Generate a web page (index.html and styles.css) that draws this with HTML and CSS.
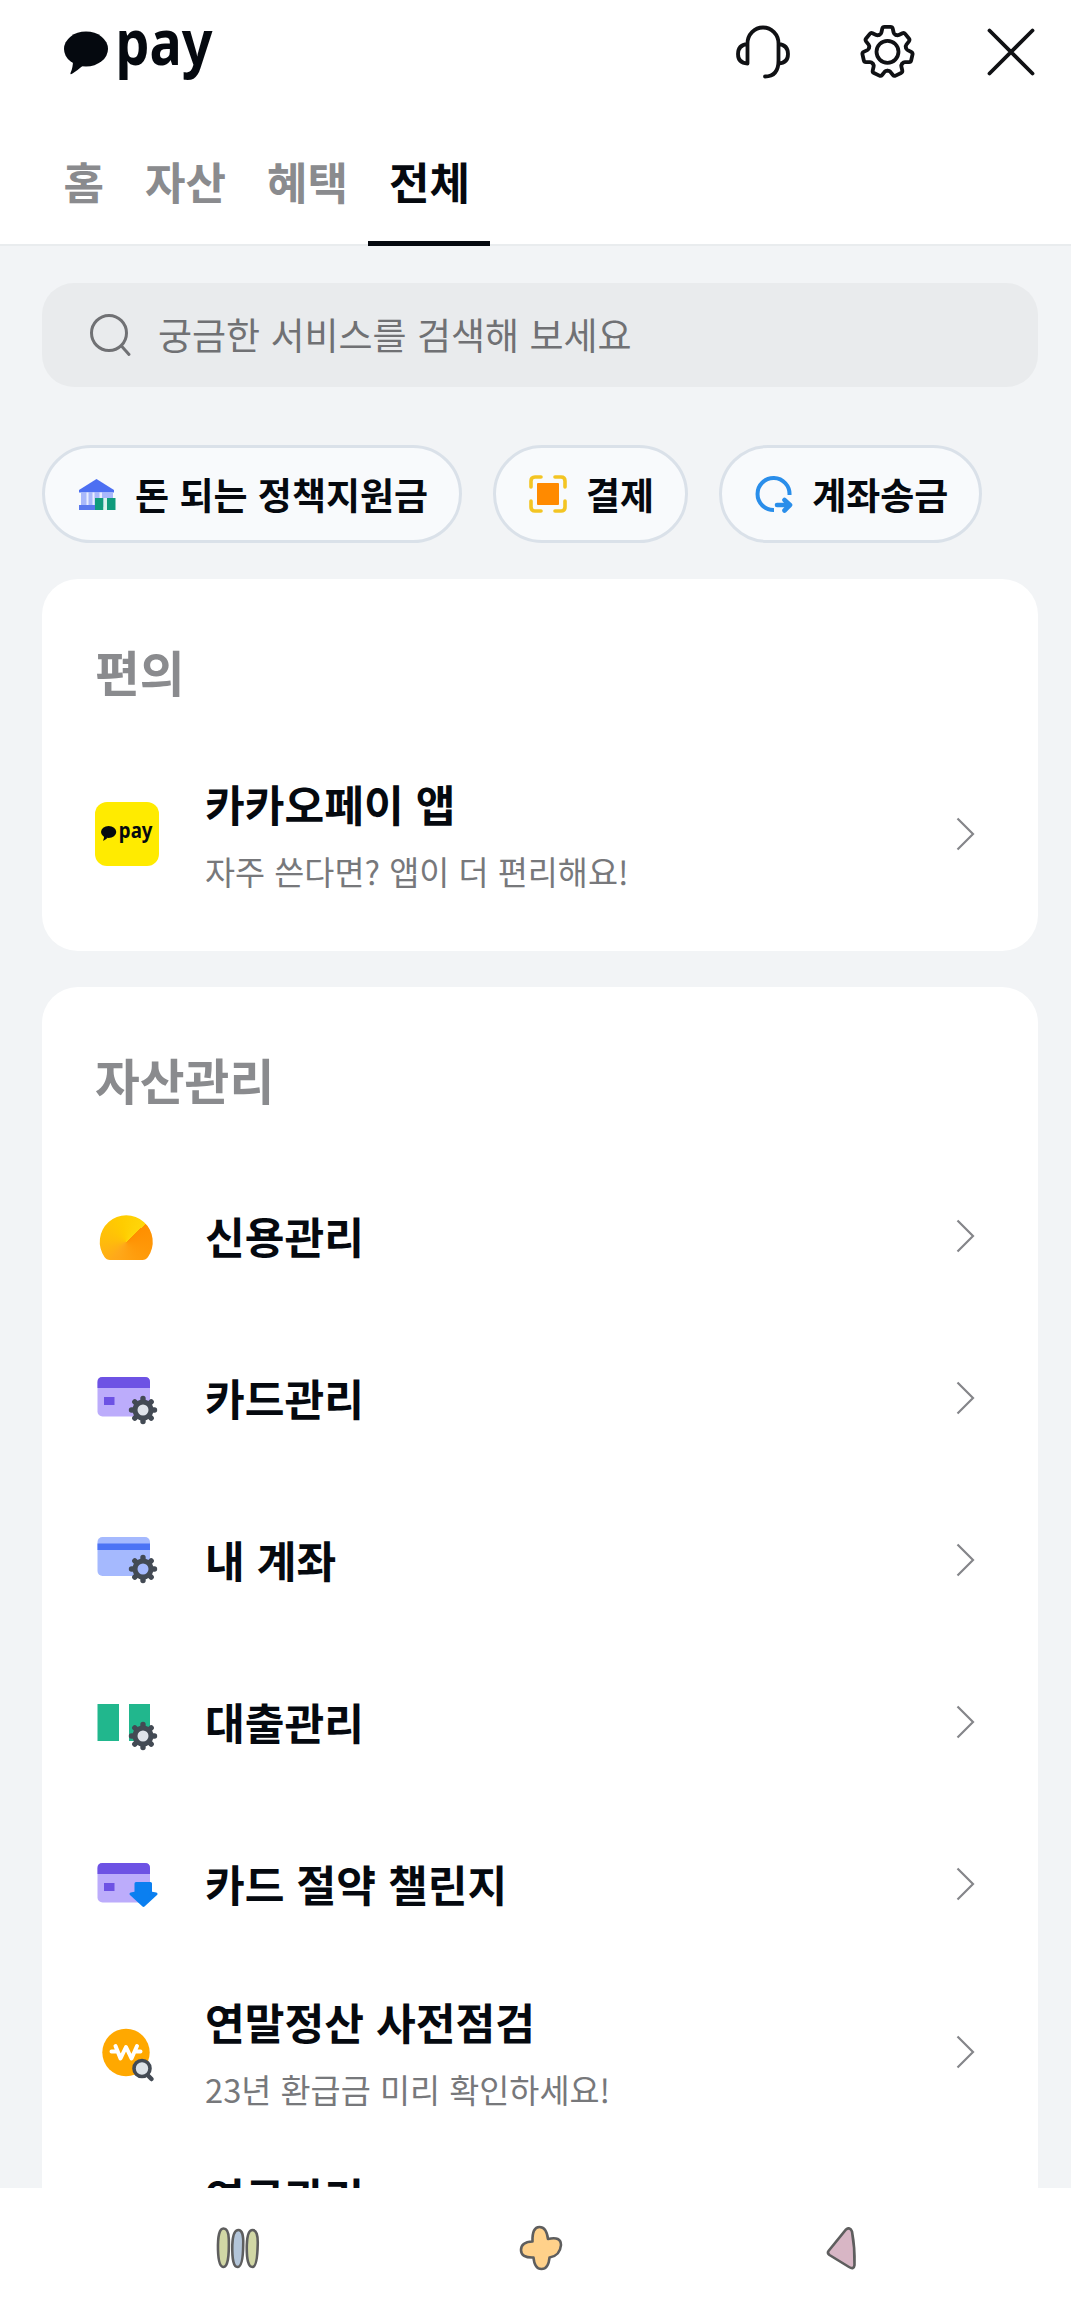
FILE: index.html
```html
<!DOCTYPE html>
<html lang="ko">
<head>
<meta charset="utf-8">
<title>pay</title>
<link rel="stylesheet" href="styles.css">
</head>
<body>
<svg class="defs" width="0" height="0" aria-hidden="true">
  <symbol id="logo" viewBox="0 0 150 50">
    <ellipse cx="22" cy="20" rx="22" ry="17.5"/>
    <path d="M9 31 Q9 39 6.500 44 Q6 46.200 8.500 44.500 Q14 41 19 36.500Z"/>
    <text class="logo-text" x="51.500" y="36" textLength="97" lengthAdjust="spacingAndGlyphs">pay</text>
  </symbol>
  <symbol id="cog" viewBox="-15 -15 30 30">
    <path d="M0-11.500V11.500M-11.500 0H11.500M-8.200-8.200L8.200 8.200M-8.200 8.200L8.200-8.200" stroke="#434a54" stroke-width="5.400" stroke-linecap="round"/>
    <circle r="8" fill="none" stroke="#434a54" stroke-width="5"/>
    <circle class="cog-hole" r="5.500"/>
  </symbol>
  <symbol id="chevron" viewBox="0 0 20 34">
    <path d="M1.500 1.500L17 17L1.500 32.500" fill="none" stroke="#85868a" stroke-width="2.200"/>
  </symbol>
</svg>

<header class="header">
  <div class="topbar">
    <svg class="logo" role="img" aria-label="pay"><use href="#logo"/></svg>
    <div class="actions">
      <svg class="action" viewBox="-28 -28 56 56" fill="none">
        <path d="M-15.500 11.500V-8.500A15.500 16 0 0 1 15.500-8.500V8.500Q15.500 24.500 2 24.500M-15.500-8Q-25-7-25 2Q-25 11-15.500 11.500M15.500-8Q25-7 25 2Q25 11 15.500 11.500" stroke-linecap="round"/>
      </svg>
      <svg class="action" viewBox="-28 -28 56 56" fill="none">
        <g transform="translate(.5 -.2)">
          <path id="tooth" d="M-8-17.100Q-6.500-17.800-6.100-19.300L-5.200-23.300Q-4.800-25-3-25H3Q4.800-25 5.200-23.300L6.100-19.300Q6.500-17.800 8-17.100" stroke-linecap="round"/>
          <use href="#tooth" transform="rotate(51.430)"/>
          <use href="#tooth" transform="rotate(102.860)"/>
          <use href="#tooth" transform="rotate(154.290)"/>
          <use href="#tooth" transform="rotate(205.710)"/>
          <use href="#tooth" transform="rotate(257.140)"/>
          <use href="#tooth" transform="rotate(308.570)"/>
          <circle r="11"/>
        </g>
      </svg>
      <svg class="action" viewBox="-28 -28 56 56" fill="none">
        <path d="M-21.500-21.500L21.500 21.500M21.500-21.500L-21.500 21.500" stroke-linecap="round"/>
      </svg>
    </div>
  </div>
  <nav class="tabs">
    <a class="tab">홈</a>
    <a class="tab">자산</a>
    <a class="tab">혜택</a>
    <a class="tab tab-active">전체</a>
  </nav>
</header>

<main class="content">
  <div class="search">
    <svg class="search-icon" viewBox="0 0 44 44" fill="none" stroke="#707174" stroke-width="3" stroke-linecap="round"><circle cx="20" cy="20" r="17.500"/><path d="M32.500 33L40 41.500"/></svg>
    <span class="search-text">궁금한 서비스를 검색해 보세요</span>
  </div>

  <div class="chips">
    <div class="chip">
      <svg class="chip-icon" viewBox="0 0 38 38">
        <path d="M1 15L18.500 4L36 15V17.500H1Z" fill="#4d6ff2"/>
        <path d="M3 17.500H35V32H3Z" fill="#a9b8fb"/>
        <path d="M8.500 17.500H10.500V32H8.500ZM14.500 17.500H16.500V32H14.500ZM21.500 17.500H24V24H21.500Z" fill="#e9edff"/>
        <path d="M1 30H18V35H1Z" fill="#5a78ee"/>
        <path d="M17 23H25.500V35H17ZM29 23H37.500V35H29Z" fill="#109b7c"/>
        <path d="M25.500 23H29V35H25.500Z" fill="#d9f3ec"/>
      </svg>
      <span>돈 되는 정책지원금</span>
    </div>
    <div class="chip">
      <svg class="chip-icon" viewBox="0 0 38 38">
        <path d="M2 12V6Q2 2 6 2H12M26 2H32Q36 2 36 6V12M36 26V32Q36 36 32 36H26M12 36H6Q2 36 2 32V26" fill="none" stroke="#f3c523" stroke-width="3.600" stroke-linecap="round"/>
        <rect x="8" y="8" width="22" height="22" rx="1" fill="#ff8a00"/>
      </svg>
      <span>결제</span>
    </div>
    <div class="chip">
      <svg class="chip-icon" viewBox="0 0 38 38" fill="none" stroke="#2a8eea" stroke-width="4">
        <path d="M34.500 20A16 16 0 1 0 19 35"/>
        <path d="M22 30H34M29.500 25L35 30L29.500 35.500" stroke-width="4.600" stroke-linejoin="round" stroke-linecap="round"/>
      </svg>
      <span>계좌송금</span>
    </div>
  </div>

  <section class="card">
    <h2 class="card-title">편의</h2>
    <div class="row row-tall">
      <div class="icon app-icon"><svg class="app-logo"><use href="#logo"/></svg></div>
      <div class="label"><strong>카카오페이 앱</strong><span>자주 쓴다면? 앱이 더 편리해요!</span></div>
      <svg class="chevron"><use href="#chevron"/></svg>
    </div>
  </section>

  <section class="card">
    <h2 class="card-title">자산관리</h2>
    <div class="row">
      <div class="icon gauge"></div>
      <div class="label"><strong>신용관리</strong></div>
      <svg class="chevron"><use href="#chevron"/></svg>
    </div>
    <div class="row">
      <svg class="icon" viewBox="0 0 64 64">
        <rect x="2.500" y="11" width="52.500" height="39.500" rx="5" fill="#bcacfb"/>
        <path d="M2.500 22V16Q2.500 11 7.500 11H50Q55 11 55 16V22Z" fill="#6d52e4"/>
        <path d="M9 31H19.500V39H9Z" fill="#6d52e4"/>
        <use class="pale" href="#cog" x="33" y="29" width="30" height="30"/>
      </svg>
      <div class="label"><strong>카드관리</strong></div>
      <svg class="chevron"><use href="#chevron"/></svg>
    </div>
    <div class="row">
      <svg class="icon" viewBox="0 0 64 64">
        <rect x="2.500" y="9" width="52.500" height="39" rx="5" fill="#a5b9fe"/>
        <path d="M2.500 15.500H55V22H2.500Z" fill="#4c73f5"/>
        <use class="blue" href="#cog" x="33" y="26" width="30" height="30"/>
      </svg>
      <div class="label"><strong>내 계좌</strong></div>
      <svg class="chevron"><use href="#chevron"/></svg>
    </div>
    <div class="row">
      <svg class="icon" viewBox="0 0 64 64">
        <path d="M2.500 14H24V51H2.500ZM34 14H55V51H34Z" fill="#21b78d"/>
        <use class="pale" href="#cog" x="33" y="31" width="30" height="30"/>
      </svg>
      <div class="label"><strong>대출관리</strong></div>
      <svg class="chevron"><use href="#chevron"/></svg>
    </div>
    <div class="row">
      <svg class="icon" viewBox="0 0 64 64">
        <rect x="2.500" y="11" width="52.500" height="39.500" rx="5" fill="#bcacfb"/>
        <path d="M2.500 22V16Q2.500 11 7.500 11H50Q55 11 55 16V22Z" fill="#6d52e4"/>
        <path d="M9 31H19.500V39H9Z" fill="#6d52e4"/>
        <path d="M41 31.500H55.500V41L61 42L48.500 53.500L36 42L41 41Z" fill="#0b7ff0" stroke="#0b7ff0" stroke-width="3" stroke-linejoin="round"/>
      </svg>
      <div class="label"><strong>카드 절약 챌린지</strong></div>
      <svg class="chevron"><use href="#chevron"/></svg>
    </div>
    <div class="row row-tall">
      <svg class="icon" viewBox="0 0 64 64">
        <circle cx="31" cy="32.500" r="23.700" fill="#ffa800"/>
        <path d="M16.500 31.500H20M42.500 31.500H45.500M20.500 26L25.500 38.500L31 27L36.500 38.500L42 26" fill="none" stroke="#fff" stroke-width="4" stroke-linecap="round" stroke-linejoin="round"/>
        <path d="M53 55.500L56.500 59" stroke="#434a54" stroke-width="4.500" stroke-linecap="round"/>
        <circle cx="47" cy="48.500" r="8" fill="#dce2e8" stroke="#434a54" stroke-width="3.600"/>
      </svg>
      <div class="label"><strong>연말정산 사전점검</strong><span>23년 환급금 미리 확인하세요!</span></div>
      <svg class="chevron"><use href="#chevron"/></svg>
    </div>
    <div class="row row-tall row-cut">
      <div class="icon"></div>
      <div class="label"><strong>연금관리</strong></div>
    </div>
  </section>
</main>

<footer class="navbar">
  <svg class="nav-icon" viewBox="0 0 48 48" stroke="#5e5e5e" stroke-width="2.600">
    <path d="M9.500 4.500Q14.500 4.500 14.800 15Q15.500 43 9.500 43Q4.500 43 4 26Q3.500 4.500 9.500 4.500Z" fill="#d1d7a5"/>
    <path d="M24.500 6Q29.800 6 29.200 21Q29 43 23.500 43Q17.800 43 18.300 21Q18.800 6 24.500 6Z" fill="#b3c5d9"/>
    <path d="M38.500 6Q44.300 6 43.700 21Q43.200 43 38.500 43Q32.300 43 32.800 21Q33.300 6 38.500 6Z" fill="#d1d7a5"/>
  </svg>
  <svg class="nav-icon" viewBox="0 0 48 48" stroke="#5e5e5e" stroke-width="2.600">
    <path d="M22.500 3Q29.500 3 31 15Q44 12 44 21Q43 32 32.500 33.500Q31.500 45 24.500 45Q17.500 45 16.500 33.500Q4 34 4 26Q4 18 15.500 17.500Q15 3 22.500 3Z" fill="#ffd18a" stroke-linejoin="round"/>
  </svg>
  <svg class="nav-icon" viewBox="0 0 48 48" stroke="#5e5e5e" stroke-width="2.600">
    <path d="M9.500 27L27 5.500Q31 2.500 33 7.500Q36 24 35.500 41Q35 46 30 43L10.500 31Q8 29 9.500 27Z" fill="#d8b6c5"/>
  </svg>
</footer>
</body>
</html>
```
FILE: styles.css
```css
* { box-sizing: border-box; }

body {
  margin: 0;
  width: 1071px;
  height: 2314px;
  display: flex;
  flex-direction: column;
  overflow: hidden;
  background: #fff;
  color: #05090f;
  font-family: "Noto Sans CJK KR", sans-serif;
}

svg { display: block; flex: none; }
.defs { position: absolute; }

.header {
  flex: none;
  height: 246px;
  display: flex;
  flex-direction: column;
  justify-content: space-between;
  background: linear-gradient(#fff 244px, #e9ecee 244px);
}

.topbar {
  display: flex;
  align-items: center;
  justify-content: space-between;
  padding: 24px 32px 0 64px;
}

.logo { width: 150px; height: 50px; margin-top: 4px; overflow: visible; fill: #05090f; }
#logo { overflow: visible; }
.logo-text { font: 700 62px "Noto Sans", sans-serif; }

.actions { display: flex; gap: 68px; }
.action { width: 56px; height: 56px; stroke: #101114; stroke-width: 3.8; }

.tabs { display: flex; padding-left: 43px; }
.tab {
  height: 110px;
  padding: 15px 20.500px 0;
  border-bottom: 5px solid transparent;
  font-size: 44px;
  font-weight: 700;
  line-height: 60px;
  color: #8a8b8e;
}
.tab-active { color: #05090f; border-bottom-color: #05090f; }

.content {
  flex: none;
  height: 1942px;
  overflow: hidden;
  padding: 37px 33px 0 42px;
  background: #f2f4f6;
}

.search {
  display: flex;
  align-items: center;
  gap: 25px;
  height: 104px;
  padding: 0 47px;
  border-radius: 32px;
  background: #e9ebed;
}
.search-icon { width: 44px; height: 44px; }
.search-text { padding-bottom: 2px; font-size: 37px; line-height: 50px; color: #707174; }

.chips { display: flex; gap: 31px; padding: 58px 0 36px; }
.chip {
  display: flex;
  align-items: center;
  gap: 19px;
  height: 98px;
  padding: 0 31px 0 33px;
  border: 3px solid #dae1e9;
  border-radius: 49px;
  background: #f8fafc;
  font-size: 37px;
  font-weight: 700;
  line-height: 50px;
  white-space: nowrap;
}
.chip span { padding-bottom: 1px; }
.chip-icon { width: 38px; height: 38px; }

.card {
  margin-bottom: 36px;
  padding: 56px 62px 30px 53px;
  border-radius: 36px;
  background: #fff;
}
.card-title {
  margin: 0;
  height: 112px;
  font-size: 48.700px;
  font-weight: 700;
  line-height: 72px;
  color: #8a8b8e;
}

.row { display: flex; align-items: center; height: 162px; }
.row-tall { height: 174px; }
.icon { flex: none; width: 64px; height: 64px; }
.app-icon {
  display: flex;
  align-items: center;
  justify-content: center;
  border-radius: 12px;
  background: #ffeb00;
}
.app-logo { width: 52px; height: 17.500px; fill: #05090f; }

.gauge {
  background: conic-gradient(from 47deg at 31px 38px, #ff8f00, #ff9c0c 90deg, #ffa91a 170deg, #ffbd0a 230deg, #ffcc00 300deg, #ffd60a 360deg);
  clip-path: path("M15 56Q11.500 56 9.500 53A26.500 26.500 0 1 1 53 53Q51 56 47.500 56Z");
}

.label { flex: 1; display: flex; flex-direction: column; margin-left: 46px; padding-bottom: 3px; }
.label strong { font-size: 43.200px; font-weight: 700; line-height: 64px; }
.label span { font-size: 32.700px; line-height: 48px; margin-top: 12px; color: #77787b; }
.row-cut { align-items: flex-start; padding-top: 25px; }

.chevron { width: 20px; height: 34px; }

.pale { fill: #dfe3ea; }
.blue { fill: #a5b9fe; }

.navbar { flex: 1; display: flex; justify-content: space-between; padding: 36px 204px 0 214px; }
.nav-icon { width: 48px; height: 48px; }
```
